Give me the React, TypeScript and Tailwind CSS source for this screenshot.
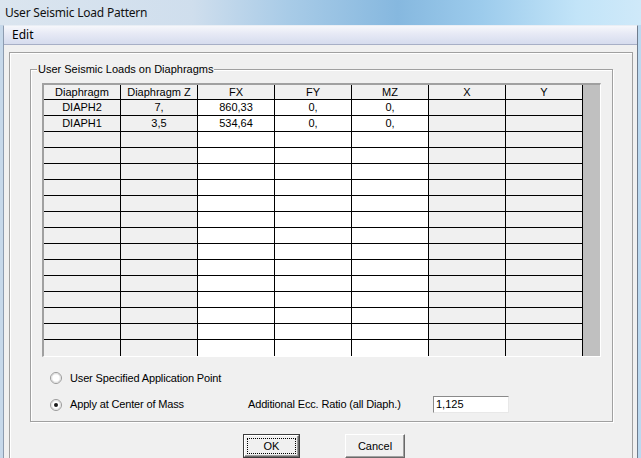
import React from "react";

const columns = ["Diaphragm", "Diaphragm Z", "FX", "FY", "MZ", "X", "Y"];

const loads: string[][] = [
  ["DIAPH2", "7,", "860,33", "0,", "0,", "", ""],
  ["DIAPH1", "3,5", "534,64", "0,", "0,", "", ""],
  ...Array.from({ length: 14 }, () => ["", "", "", "", "", "", ""]),
];

// FX, FY, MZ are editable -> white cells
const editable = [false, false, true, true, true, false, false];

function Radio({ checked }: { checked?: boolean }) {
  return (
    <svg width="12" height="12" viewBox="0 0 12 12" className="shrink-0">
      <circle cx="6" cy="6" r="5.5" fill="#f6f6f6" stroke="#9a9a9a" />
      <circle cx="6" cy="6" r="4.3" fill="#ffffff" stroke="#dcdcdc" />
      {checked && <circle cx="6" cy="6" r="2" fill="#1a1a1a" />}
    </svg>
  );
}

function LoadTable() {
  return (
    <div className="ml-[11px] mt-[13px] w-[559px] h-[274px] flex border-t-2 border-l-2 border-[#a0a0a0] border-b border-r border-b-white border-r-white overflow-hidden">
      <div className="flex flex-col">
        {/* header */}
        <div className="flex h-[15px] border-b border-black">
          {columns.map((c) => (
            <div
              key={c}
              className="w-[77px] border-r border-black bg-[#f0f0f0] flex items-center justify-center leading-none"
            >
              {c}
            </div>
          ))}
        </div>
        {loads.map((row, i) => (
          <div
            key={i}
            className={`flex h-[16px] shrink-0 ${i < loads.length - 1 ? "border-b border-black" : ""}`}
          >
            {row.map((v, j) => (
              <div
                key={j}
                className={`w-[77px] border-r border-black flex items-center justify-center leading-none ${
                  editable[j] ? "bg-white" : "bg-[#f0f0f0]"
                }`}
              >
                {v}
              </div>
            ))}
          </div>
        ))}
      </div>
      {/* scrollbar track */}
      <div className="w-[17px] shrink-0 bg-[#c0c0c0]" />
    </div>
  );
}

export default function App() {
  return (
    <div className="w-[641px] h-[458px] overflow-hidden flex flex-col bg-[#f0f0f0] text-black text-[11px] font-['Liberation_Sans',Arial,sans-serif]">
      {/* title bar */}
      <div className="h-[25px] shrink-0 flex items-center pl-[5px] bg-[linear-gradient(90deg,#dbe5ef_0%,#cfdeed_30%,#a8cbe7_45%,#86b8df_62%,#9ccbec_75%,#c2e4f8_90%,#cfe9f9_100%)] font-['Noto_Sans',sans-serif] text-[12px] tracking-[-0.2px] text-[#111]">
        User Seismic Load Pattern
      </div>

      <div className="flex flex-1 min-h-0">
        <div className="w-[3px] shrink-0 bg-[#c6d8ea]" />
        <div className="flex-1 min-w-0 flex flex-col border-t border-l border-r border-t-[#e9eef5] border-l-[#8d9cb0] border-r-[#6f7c8d]">
          {/* menu bar */}
          <div className="h-[19px] shrink-0 flex items-center pl-[8px] border-b border-[#a7afc6] bg-[linear-gradient(180deg,#f6f7fb_0%,#e6e9f5_45%,#d6dcee_100%)] font-['Noto_Sans',sans-serif] text-[12px]">
            Edit
          </div>

          <div className="flex-1 min-h-0 pt-[7px] pl-[5px] pr-[4px]">
            <div className="h-full border-t border-l border-r border-[#a0a0a0] shadow-[inset_1px_1px_0_#ffffff] pt-[16px] pl-[20px]">
              {/* group box */}
              <div className="relative w-[583px] h-[353px] border border-[#a0a0a0] shadow-[inset_1px_1px_0_#ffffff,1px_1px_0_#ffffff] flex flex-col">
                <span className="absolute left-[6px] top-[-8px] px-[1px] bg-[#f0f0f0] leading-[14px]">
                  User Seismic Loads on Diaphragms
                </span>

                <LoadTable />

                <div className="mt-[13px] ml-[19px] h-[16px] flex items-center">
                  <Radio />
                  <span className="ml-[8px] tracking-[-0.15px]">User Specified Application Point</span>
                </div>

                <div className="mt-[10px] ml-[19px] h-[17px] flex items-center">
                  <Radio checked />
                  <span className="ml-[8px] w-[178px] tracking-[-0.15px]">Apply at Center of Mass</span>
                  <span className="w-[185px] tracking-[-0.15px]">Additional Ecc. Ratio (all Diaph.)</span>
                  <div className="w-[76px] h-[17px] bg-white border-t border-l border-[#8a8a8a] border-b border-r border-b-[#e8e8e8] border-r-[#e8e8e8] flex items-center pl-[2px]">
                    1,125
                  </div>
                </div>
              </div>

              {/* buttons */}
              <div className="mt-[12px] flex">
                <button className="ml-[213px] w-[57px] h-[24px] border border-[#3c3c3c] bg-[#f0f0f0] p-0">
                  <div className="h-full w-full border-t border-l border-white border-b border-r border-b-[#696969] border-r-[#696969] shadow-[inset_-1px_-1px_0_#a0a0a0] p-[2px]">
                    <div className="h-full w-full border border-dotted border-black flex items-center justify-center leading-none">
                      OK
                    </div>
                  </div>
                </button>
                <button className="ml-[45px] w-[60px] h-[24px] bg-[#f0f0f0] border-t border-l border-white border-b border-r border-b-[#696969] border-r-[#696969] shadow-[inset_-1px_-1px_0_#a0a0a0] flex items-center justify-center leading-none">
                  Cancel
                </button>
              </div>
            </div>
          </div>
        </div>
        <div className="w-[3px] shrink-0 bg-[#bcd9f0]" />
      </div>
    </div>
  );
}
